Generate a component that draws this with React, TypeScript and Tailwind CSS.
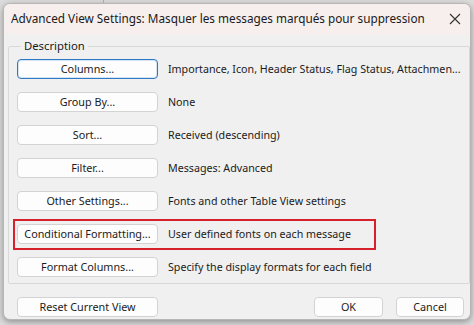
import React from "react";

const rows: { label: string; desc: string; primary?: boolean; marked?: boolean }[] = [
  { label: "Columns...", desc: "Importance, Icon, Header Status, Flag Status, Attachmen...", primary: true },
  { label: "Group By...", desc: "None" },
  { label: "Sort...", desc: "Received (descending)" },
  { label: "Filter...", desc: "Messages: Advanced" },
  { label: "Other Settings...", desc: "Fonts and other Table View settings" },
  { label: "Conditional Formatting...", desc: "User defined fonts on each message", marked: true },
  { label: "Format Columns...", desc: "Specify the display formats for each field" },
];

function Btn({ children, primary, className = "" }: { children: React.ReactNode; primary?: boolean; className?: string }) {
  return (
    <button
      className={
        "h-[20px] shrink-0 whitespace-nowrap rounded-[4px] border bg-[#fdfdfd] text-[10.8px] leading-none text-[#1b1b1b] " +
        (primary ? "border-[#2f78c4] shadow-[inset_0_0_0_1px_#d5e4f4] " : "border-[#d3d3d3] ") +
        className
      }
    >
      {children}
    </button>
  );
}

export default function App() {
  return (
    <div
      className="relative h-[325px] w-[474px] overflow-hidden bg-[#dcdcdc] pl-[3px] pt-[3px]"
      style={{ fontFamily: '"Noto Sans", "Open Sans", sans-serif' }}
    >
      <div className="absolute left-[103px] top-0 h-[3px] w-px bg-[#a9a9a9]" />
      <div className="flex h-[317px] w-[468px] flex-col overflow-hidden rounded-[7px] border border-[#b9b5b5] bg-[#f0f0f0] shadow-[0_2px_6px_rgba(0,0,0,0.35)]">
        {/* title bar */}
        <div className="flex h-[30px] shrink-0 items-center justify-between bg-[#f6efee] pl-[7px] pr-[8px]">
          <span className="text-[11.75px] text-[#1a1a1a]">
            Advanced View Settings: Masquer les messages marqués pour suppression
          </span>
          <svg width="12" height="12" viewBox="0 0 12 12" className="mr-[1px]">
            <path d="M1 1 L11 11 M11 1 L1 11" stroke="#333" strokeWidth="1.1" />
          </svg>
        </div>

        {/* body */}
        <div className="flex flex-1 flex-col px-[4px] pt-[6px]">
          <fieldset className="rounded-[2px] border border-[#d8d8d8] pb-[6px] pl-[8px] pr-[8px]">
            <legend className="ml-[4px] px-[3px] text-[11.3px] leading-[12px] text-[#1a1a1a]">Description</legend>
            <div className="flex flex-col gap-[13px] pt-[7px]">
              {rows.map((r) => (
                <div key={r.label} className="relative flex items-center gap-[10px]">
                  {r.marked && (
                    <span className="pointer-events-none absolute -left-[4px] -top-[5px] h-[31px] w-[363px] border-2 border-[#d6202b]" />
                  )}
                  <Btn primary={r.primary} className="w-[141px]">
                    {r.label}
                  </Btn>
                  <span className="whitespace-nowrap text-[10.7px] text-[#1b1b1b]">{r.desc}</span>
                </div>
              ))}
            </div>
          </fieldset>

          <div className="flex items-center pl-[9px] pr-[2px] pt-[13px]">
            <Btn className="w-[141px]">Reset Current View</Btn>
            <div className="flex-1" />
            <Btn className="w-[69px]">OK</Btn>
            <Btn className="ml-[13px] w-[68px]">Cancel</Btn>
          </div>
        </div>
      </div>
    </div>
  );
}
